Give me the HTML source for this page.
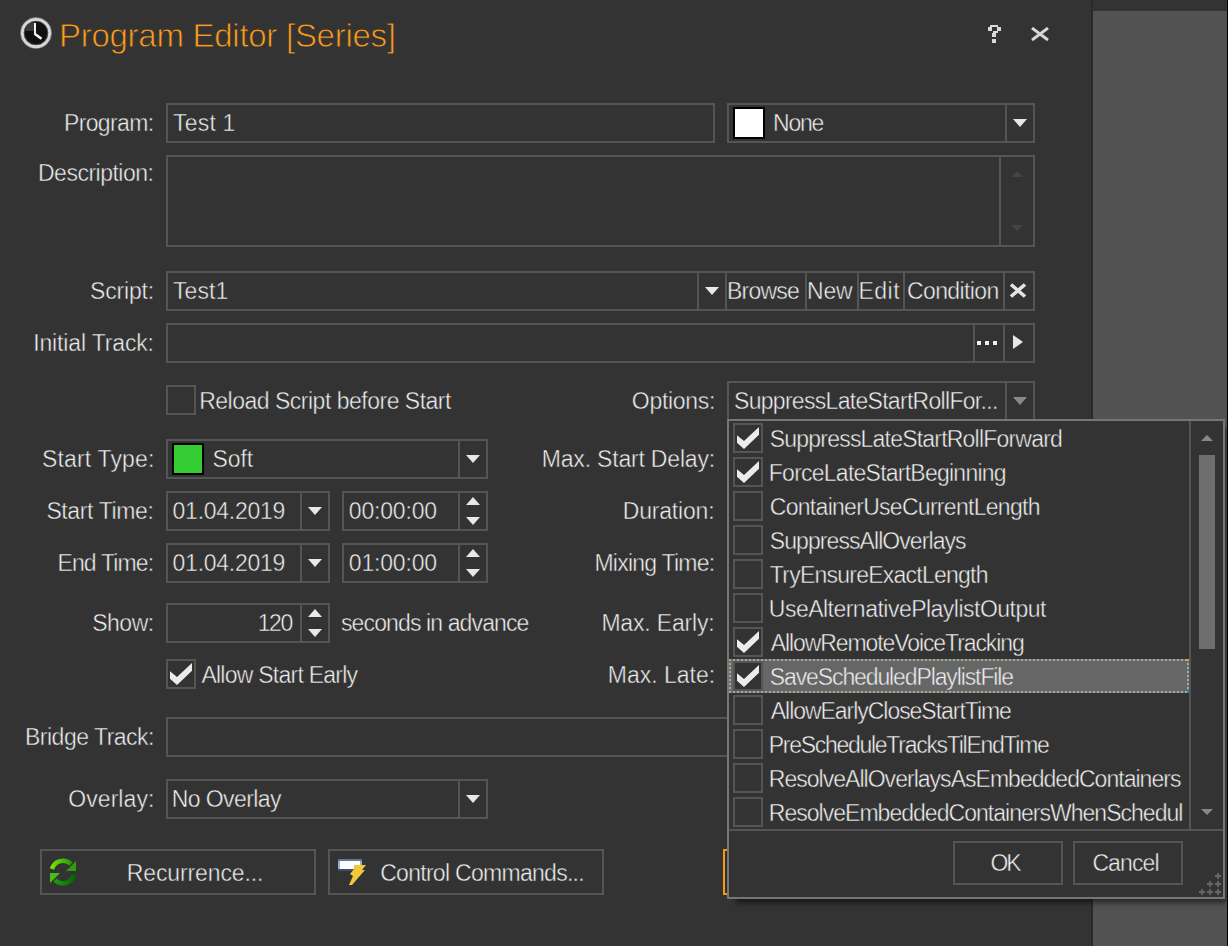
<!DOCTYPE html>
<html><head><meta charset="utf-8">
<style>
html,body{margin:0;padding:0;}
body{width:1228px;height:946px;background:#333333;position:relative;overflow:hidden;font-family:"Liberation Sans",sans-serif;}
.a{position:absolute;box-sizing:border-box;}
.b{position:absolute;box-sizing:border-box;border:2px solid #555555;}
.vd{position:absolute;width:2px;background:#555555;}
.t{position:absolute;font-size:23px;line-height:23px;color:#f0f0f0;white-space:nowrap;z-index:5;-webkit-text-stroke:0.45px #333;}
.r{text-align:right;}
.dn{position:absolute;width:0;height:0;border-left:7px solid transparent;border-right:7px solid transparent;border-top:8px solid #e8e8e8;}
.up{position:absolute;width:0;height:0;border-left:7px solid transparent;border-right:7px solid transparent;border-bottom:8px solid #e8e8e8;}
.hl{background:#666666;}
.hl:before{content:"";position:absolute;left:0;top:0;right:0;height:2px;background:repeating-linear-gradient(90deg,#ff9900 0 2px,#0a84ff 2px 4px);}
.hl:after{content:"";position:absolute;left:0;bottom:0;right:0;height:2px;background:repeating-linear-gradient(90deg,#ff9900 0 2px,#0a84ff 2px 4px);}
.hlv{position:absolute;top:0;bottom:0;width:2px;background:repeating-linear-gradient(180deg,#ff9900 0 2px,#0a84ff 2px 4px);}
</style></head>
<body>
<!-- right gray panel -->
<div class="a" style="left:1091px;top:0;width:2px;height:946px;background:#2a2a2a"></div>
<div class="a" style="left:1093px;top:11px;width:134px;height:935px;background:#525252"></div>
<div class="a" style="left:1227px;top:0;width:1px;height:946px;background:#000"></div>

<!-- title -->
<svg class="a" style="left:19px;top:16px" width="34" height="34" viewBox="0 0 34 34">
  <circle cx="17" cy="17" r="15.6" fill="none" stroke="#7a7a7e" stroke-width="1"/>
  <circle cx="17" cy="17" r="13.6" fill="#101010" stroke="#d6d6dc" stroke-width="3"/>
  <circle cx="17" cy="17" r="11.8" fill="none" stroke="#5a5a5a" stroke-width="0.8"/>
  <path d="M6 15 A11 11 0 0 1 15 6 L15 15 Z" fill="#3a3a3a"/>
  <rect x="15" y="7" width="2" height="12" fill="#f4f4f4"/>
  <path d="M16 18 L22.5 22.8" stroke="#f4f4f4" stroke-width="2.6"/>
</svg>
<svg class="a" style="left:986px;top:24px" width="16" height="20" viewBox="0 0 16 20" fill="#d8d8d8"><rect x="4" y="1" width="8" height="2"/><rect x="2" y="3" width="4" height="4"/><rect x="11" y="3" width="4" height="4"/><rect x="7" y="7" width="5" height="2"/><rect x="6" y="9" width="4" height="4"/><rect x="6" y="15" width="4" height="4"/></svg>
<svg class="a" style="left:1031px;top:27px" width="18" height="14" viewBox="0 0 18 14"><path d="M1 1 L17 13 M17 1 L1 13" stroke="#d6d6d6" stroke-width="3"/></svg>

<div class="t" id="title" style="left:59.00px;top:19.00px;letter-spacing:-0.273px;font-size:33px;line-height:33px;color:#ff9c1a;-webkit-text-stroke:0.8px #333">Program Editor [Series]</div>
<div class="t" id="l_prog" style="left:64.00px;top:112.00px;letter-spacing:-0.643px;">Program:</div>
<div class="t" id="l_desc" style="left:38.00px;top:162.00px;letter-spacing:-0.500px;">Description:</div>
<div class="t" id="l_scr" style="left:90.00px;top:280.00px;letter-spacing:-0.167px;">Script:</div>
<div class="t" id="l_init" style="left:33.20px;top:332.00px;letter-spacing:-0.146px;">Initial Track:</div>
<div class="t" id="l_stype" style="left:42.00px;top:448.00px;letter-spacing:0.150px;">Start Type:</div>
<div class="t" id="l_stime" style="left:46.40px;top:500.00px;letter-spacing:-0.380px;">Start Time:</div>
<div class="t" id="l_etime" style="left:57.40px;top:552.00px;letter-spacing:-0.850px;">End Time:</div>
<div class="t" id="l_show" style="left:92.20px;top:612.00px;letter-spacing:-0.475px;">Show:</div>
<div class="t" id="l_bridge" style="left:25.00px;top:726.00px;letter-spacing:-0.500px;">Bridge Track:</div>
<div class="t" id="l_ovl" style="left:68.20px;top:788.00px;letter-spacing:0.086px;">Overlay:</div>
<div class="t" id="r_opt" style="left:631.80px;top:390.00px;letter-spacing:-0.300px;">Options:</div>
<div class="t" id="r_msd" style="left:541.80px;top:448.00px;letter-spacing:-0.193px;">Max. Start Delay:</div>
<div class="t" id="r_dur" style="left:622.80px;top:500.00px;letter-spacing:-0.200px;">Duration:</div>
<div class="t" id="r_mix" style="left:594.40px;top:552.00px;letter-spacing:-0.754px;">Mixing Time:</div>
<div class="t" id="r_me" style="left:601.40px;top:612.00px;letter-spacing:-0.180px;">Max. Early:</div>
<div class="t" id="r_ml" style="left:607.80px;top:664.00px;letter-spacing:-0.012px;">Max. Late:</div>
<div class="t" id="test1" style="left:173.00px;top:112.00px;letter-spacing:0.200px;">Test 1</div>
<div class="t" id="none" style="left:773.00px;top:112.00px;letter-spacing:-1.233px;">None</div>
<div class="t" id="test1b" style="left:173.00px;top:280.00px;letter-spacing:0.100px;">Test1</div>
<div class="t" id="browse" style="left:727.00px;top:280.00px;letter-spacing:-0.800px;">Browse</div>
<div class="t" id="new" style="left:807.00px;top:280.00px;letter-spacing:-0.150px;">New</div>
<div class="t" id="edit" style="left:858.60px;top:280.00px;letter-spacing:0.433px;">Edit</div>
<div class="t" id="cond" style="left:907.00px;top:280.00px;letter-spacing:-0.625px;">Condition</div>
<div class="t" id="reload" style="left:199.20px;top:390.00px;letter-spacing:-0.496px;">Reload Script before Start</div>
<div class="t" id="optv" style="left:734.00px;top:390.00px;letter-spacing:-0.700px;">SuppressLateStartRollFor...</div>
<div class="t" id="soft" style="left:212.40px;top:448.00px;letter-spacing:-0.067px;">Soft</div>
<div class="t" id="d1" style="left:172.60px;top:500.00px;letter-spacing:-0.267px;">01.04.2019</div>
<div class="t" id="d2" style="left:172.60px;top:552.00px;letter-spacing:-0.267px;">01.04.2019</div>
<div class="t" id="t1" style="left:348.80px;top:500.00px;letter-spacing:-0.185px;">00:00:00</div>
<div class="t" id="t2" style="left:348.80px;top:552.00px;letter-spacing:-0.185px;">01:00:00</div>
<div class="t" id="n120" style="left:257.80px;top:612.00px;letter-spacing:-1.500px;">120</div>
<div class="t" id="secs" style="left:341.00px;top:612.00px;letter-spacing:-0.877px;">seconds in advance</div>
<div class="t" id="allow" style="left:201.40px;top:664.00px;letter-spacing:-0.749px;">Allow Start Early</div>
<div class="t" id="novl" style="left:171.80px;top:788.00px;letter-spacing:-0.589px;">No Overlay</div>
<div class="t" id="recur" style="left:126.80px;top:862.00px;letter-spacing:-0.117px;">Recurrence...</div>
<div class="t" id="ctrl" style="left:380.20px;top:862.00px;letter-spacing:-0.712px;">Control Commands...</div>
<div class="t" id="ok" style="left:990.40px;top:852.00px;letter-spacing:-2.100px;">OK</div>
<div class="t" id="cancel" style="left:1092.40px;top:852.00px;letter-spacing:-0.900px;">Cancel</div>
<!-- labels left -->

<!-- labels right -->

<!-- Program row -->
<div class="b" style="left:166px;top:103px;width:549px;height:40px"></div>
<div class="b" style="left:727px;top:103px;width:308px;height:40px"></div>
<div class="vd" style="left:1005px;top:103px;height:40px"></div>
<div class="a" style="left:733px;top:107px;width:32px;height:32px;background:#fff;border:2px solid #000"></div>
<div class="dn" style="left:1013px;top:119px"></div>

<!-- Description -->
<div class="b" style="left:166px;top:155px;width:869px;height:92px"></div>
<div class="vd" style="left:999px;top:155px;height:92px"></div>
<div class="up" style="left:1011px;top:171px;border-left-width:6px;border-right-width:6px;border-bottom:6px solid #444"></div>
<div class="dn" style="left:1011px;top:225px;border-left-width:6px;border-right-width:6px;border-top:6px solid #444"></div>

<!-- Script -->
<div class="b" style="left:166px;top:271px;width:869px;height:40px"></div>
<div class="vd" style="left:697px;top:271px;height:40px"></div>
<div class="dn" style="left:705px;top:287px"></div>
<div class="vd" style="left:725px;top:271px;height:40px"></div>
<div class="vd" style="left:805px;top:271px;height:40px"></div>
<div class="vd" style="left:857px;top:271px;height:40px"></div>
<div class="vd" style="left:903px;top:271px;height:40px"></div>
<div class="vd" style="left:1003px;top:271px;height:40px"></div>
<svg class="a" style="left:1009px;top:283px" width="18" height="15" viewBox="0 0 18 15"><path d="M2 1.5 L16 13.5 M16 1.5 L2 13.5" stroke="#e4e4e4" stroke-width="3.6"/></svg>

<!-- Initial Track -->
<div class="b" style="left:166px;top:323px;width:869px;height:40px"></div>
<div class="vd" style="left:973px;top:323px;height:40px"></div>
<div class="a" style="left:977px;top:341px;width:4px;height:4px;background:#eee"></div>
<div class="a" style="left:985px;top:341px;width:4px;height:4px;background:#eee"></div>
<div class="a" style="left:993px;top:341px;width:4px;height:4px;background:#eee"></div>
<div class="vd" style="left:1003px;top:323px;height:40px"></div>
<div class="a" style="left:1013px;top:335px;width:0;height:0;border-top:7px solid transparent;border-bottom:7px solid transparent;border-left:10px solid #e6e6e6"></div>

<!-- Reload -->
<div class="b" style="left:166px;top:385px;width:30px;height:30px"></div>

<!-- Options combo -->
<div class="b" style="left:727px;top:381px;width:308px;height:40px"></div>
<div class="vd" style="left:1005px;top:381px;height:40px"></div>
<div class="dn" style="left:1013px;top:397px;border-top-color:#8a8a8a"></div>

<!-- Start Type -->
<div class="b" style="left:166px;top:439px;width:322px;height:40px"></div>
<div class="vd" style="left:458px;top:439px;height:40px"></div>
<div class="a" style="left:172px;top:443px;width:32px;height:32px;background:#33cc33;border:2px solid #000"></div>
<div class="dn" style="left:466px;top:455px"></div>

<!-- Start Time -->
<div class="b" style="left:166px;top:491px;width:164px;height:40px"></div>
<div class="vd" style="left:300px;top:491px;height:40px"></div>
<div class="dn" style="left:308px;top:507px"></div>
<div class="b" style="left:342px;top:491px;width:146px;height:40px"></div>
<div class="vd" style="left:458px;top:491px;height:40px"></div>
<div class="up" style="left:466px;top:497px"></div>
<div class="dn" style="left:466px;top:517px"></div>

<!-- End Time -->
<div class="b" style="left:166px;top:543px;width:164px;height:40px"></div>
<div class="vd" style="left:300px;top:543px;height:40px"></div>
<div class="dn" style="left:308px;top:559px"></div>
<div class="b" style="left:342px;top:543px;width:146px;height:40px"></div>
<div class="vd" style="left:458px;top:543px;height:40px"></div>
<div class="up" style="left:466px;top:549px"></div>
<div class="dn" style="left:466px;top:569px"></div>

<!-- Show -->
<div class="b" style="left:166px;top:603px;width:164px;height:40px"></div>
<div class="vd" style="left:300px;top:603px;height:40px"></div>
<div class="up" style="left:308px;top:609px"></div>
<div class="dn" style="left:308px;top:629px"></div>

<!-- Allow start early -->
<div class="b" style="left:166px;top:659px;width:30px;height:30px"></div>
<svg class="a" style="left:166px;top:659px" width="30" height="30" viewBox="0 0 30 30"><polygon points="4,12.3 11,18 26,4 26,11.8 11,26 4,19.7" fill="#ececec"/></svg>

<!-- Bridge track -->
<div class="b" style="left:166px;top:717px;width:600px;height:40px"></div>

<!-- Overlay -->
<div class="b" style="left:166px;top:779px;width:322px;height:40px"></div>
<div class="vd" style="left:458px;top:779px;height:40px"></div>
<div class="dn" style="left:466px;top:795px"></div>

<!-- Buttons -->
<div class="b" style="left:40px;top:849px;width:276px;height:46px"></div>
<svg class="a" style="left:49px;top:858px" width="28" height="28" viewBox="0 0 28 28">
  <defs><linearGradient id="g1" x1="0" x2="1"><stop offset="0" stop-color="#74e400"/><stop offset="1" stop-color="#2a9a0a"/></linearGradient>
  <linearGradient id="g2" x1="0" x2="1"><stop offset="0" stop-color="#1e9a10"/><stop offset="1" stop-color="#006a00"/></linearGradient></defs>
  <path d="M3 11 A11.5 11.5 0 0 1 22 6" fill="none" stroke="url(#g1)" stroke-width="4.5"/>
  <polygon points="17,13 27,13 27,3" fill="#2b9e0c"/>
  <path d="M25 17 A11.5 11.5 0 0 1 6 22" fill="none" stroke="url(#g2)" stroke-width="4.5"/>
  <polygon points="1,15 11,15 1,25" fill="#46c012"/>
</svg>
<div class="b" style="left:328px;top:849px;width:276px;height:46px"></div>
<svg class="a" style="left:337px;top:858px" width="30" height="28" viewBox="0 0 30 28">
  <rect x="1" y="1" width="24" height="12" fill="#9aaad8"/>
  <rect x="1" y="1" width="24" height="2" fill="#6a7490"/>
  <rect x="1" y="11" width="24" height="2" fill="#3e4c6c"/>
  <rect x="3" y="3" width="20" height="8" fill="#fbfcff"/>
  <polygon points="17,7 29,7 25,12 28,12 21,20 15,27 12,27 16,18 13,16 17,11" fill="#f2c83a"/>
</svg>

<!-- orange focus button (under popup) -->
<div class="a" style="left:723px;top:849px;width:20px;height:46px;border:2px solid #ff9900;border-right:none"></div>
<div class="a" style="left:725px;top:851px;width:2px;height:42px;background:#263040"></div>

<!-- POPUP -->
<div class="a" style="left:736px;top:428px;width:491px;height:475px;background:rgba(0,0,0,0.5);filter:blur(2.5px)"></div>
<div class="a" style="left:727px;top:419px;width:498px;height:480px;background:#333;border:2px solid #767676"></div>
<div class="vd" style="left:1189px;top:421px;height:408px;background:#555"></div>
<div class="a" style="left:729px;top:829px;width:494px;height:2px;background:#555"></div>
<div class="up" style="left:1201px;top:435px;border-left-width:6px;border-right-width:6px;border-bottom:6px solid #888"></div>
<div class="a" style="left:1199px;top:455px;width:16px;height:194px;background:#6e6e6e"></div>
<div class="dn" style="left:1201px;top:809px;border-left-width:6px;border-right-width:6px;border-top:6px solid #888"></div>

<div class="a" style="left:729px;top:421px;width:460px;height:408px;overflow:hidden">
<div class="b" style="left:4px;top:2px;width:30px;height:30px;"></div>
<svg class="a" style="left:4px;top:2px" width="30" height="30" viewBox="0 0 30 30"><polygon points="4,12.3 11,18 26,4 26,11.8 11,26 4,19.7" fill="#ececec"/></svg>
<div class="b" style="left:4px;top:36px;width:30px;height:30px;"></div>
<svg class="a" style="left:4px;top:36px" width="30" height="30" viewBox="0 0 30 30"><polygon points="4,12.3 11,18 26,4 26,11.8 11,26 4,19.7" fill="#ececec"/></svg>
<div class="b" style="left:4px;top:70px;width:30px;height:30px;"></div>
<div class="b" style="left:4px;top:104px;width:30px;height:30px;"></div>
<div class="b" style="left:4px;top:138px;width:30px;height:30px;"></div>
<div class="b" style="left:4px;top:172px;width:30px;height:30px;"></div>
<div class="b" style="left:4px;top:206px;width:30px;height:30px;"></div>
<svg class="a" style="left:4px;top:206px" width="30" height="30" viewBox="0 0 30 30"><polygon points="4,12.3 11,18 26,4 26,11.8 11,26 4,19.7" fill="#ececec"/></svg>
<div class="a hl" style="left:0;top:238px;width:460px;height:34px"><div class="hlv" style="left:0"></div><div class="hlv" style="right:0"></div></div>
<div class="b" style="left:4px;top:240px;width:30px;height:30px;background:#333"></div>
<svg class="a" style="left:4px;top:240px" width="30" height="30" viewBox="0 0 30 30"><polygon points="4,12.3 11,18 26,4 26,11.8 11,26 4,19.7" fill="#ececec"/></svg>
<div class="b" style="left:4px;top:274px;width:30px;height:30px;"></div>
<div class="b" style="left:4px;top:308px;width:30px;height:30px;"></div>
<div class="b" style="left:4px;top:342px;width:30px;height:30px;"></div>
<div class="b" style="left:4px;top:376px;width:30px;height:30px;"></div>
</div>

<div class="b" style="left:953px;top:841px;width:110px;height:44px"></div>
<div class="b" style="left:1073px;top:841px;width:110px;height:44px"></div>
<svg class="a" style="left:1198px;top:871px" width="24" height="26" viewBox="0 0 24 26" fill="#666"><path d="M19 2h2v2h2v2h-2v2h-2v-2h-2v-2h2z"/><path d="M11 10h2v2h2v2h-2v2h-2v-2h-2v-2h2z"/><path d="M19 10h2v2h2v2h-2v2h-2v-2h-2v-2h2z"/><path d="M3 18h2v2h2v2h-2v2h-2v-2h-2v-2h2z"/><path d="M11 18h2v2h2v2h-2v2h-2v-2h-2v-2h2z"/><path d="M19 18h2v2h2v2h-2v2h-2v-2h-2v-2h2z"/></svg>
</body></html></div>
<div class="a" style="left:729px;top:421px;width:454px;height:408px;overflow:hidden">
<div class="t" id="li0" style="left:40.80px;top:7.00px;letter-spacing:-0.796px;">SuppressLateStartRollForward</div>
<div class="t" id="li1" style="left:39.80px;top:41.00px;letter-spacing:-0.755px;">ForceLateStartBeginning</div>
<div class="t" id="li2" style="left:40.80px;top:75.00px;letter-spacing:-0.708px;">ContainerUseCurrentLength</div>
<div class="t" id="li3" style="left:40.80px;top:109.00px;letter-spacing:-0.928px;">SuppressAllOverlays</div>
<div class="t" id="li4" style="left:40.80px;top:143.00px;letter-spacing:-0.758px;">TryEnsureExactLength</div>
<div class="t" id="li5" style="left:39.80px;top:177.00px;letter-spacing:-0.515px;">UseAlternativePlaylistOutput</div>
<div class="t" id="li6" style="left:41.80px;top:211.00px;letter-spacing:-1.095px;">AllowRemoteVoiceTracking</div>
<div class="t" id="li7" style="left:40.80px;top:245.00px;letter-spacing:-1.113px;-webkit-text-stroke-color:#666;">SaveScheduledPlaylistFile</div>
<div class="t" id="li8" style="left:41.80px;top:279.00px;letter-spacing:-1.040px;">AllowEarlyCloseStartTime</div>
<div class="t" id="li9" style="left:39.80px;top:313.00px;letter-spacing:-1.284px;">PreScheduleTracksTilEndTime</div>
<div class="t" id="li10" style="left:39.80px;top:347.00px;letter-spacing:-0.976px;">ResolveAllOverlaysAsEmbeddedContainers</div>
<div class="t" id="li11" style="left:39.80px;top:381.00px;letter-spacing:-0.976px;">ResolveEmbeddedContainersWhenSchedul</div>
